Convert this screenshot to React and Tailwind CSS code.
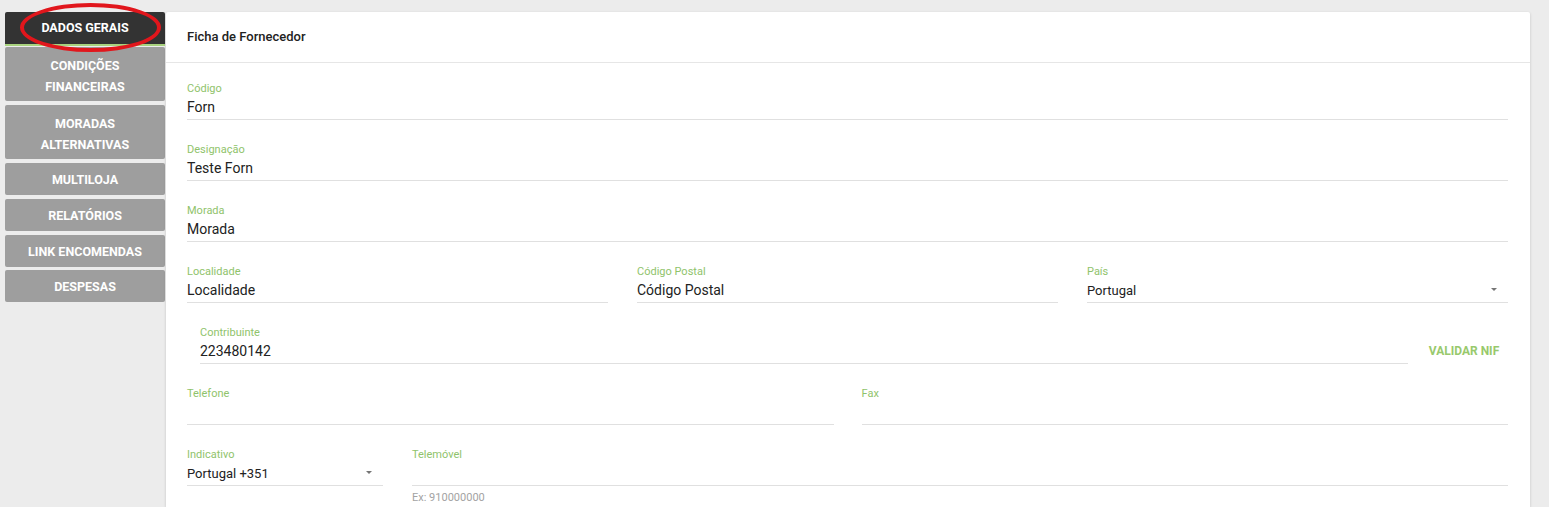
import React from "react";

const LABEL = "text-[11px] leading-[14px] text-[#8fc36b]";

function Field({ label, value, className = "", select = false, hint }) {
  return (
    <div className={"relative flex flex-col " + className}>
      <div className={LABEL}>{label}</div>
      <div className={(select ? "text-[13px]" : "text-[14px]") + " leading-[23px] h-[23px] text-[#222]"}>{value}</div>
      <div className="h-px bg-[#e0e0e0]" />
      {select && (
        <div className="absolute right-[11px] top-[23px] w-0 h-0 border-l-[3px] border-r-[3px] border-t-[3px] border-l-transparent border-r-transparent border-t-[#757575]" />
      )}
      {hint && (
        <div className="absolute left-0 top-[43px] text-[11px] leading-[14px] text-[#a3a3a3]">{hint}</div>
      )}
    </div>
  );
}

function Tab({ children, className = "" }) {
  return (
    <div
      className={
        "flex flex-col items-center justify-center rounded-[2px] bg-[#9e9e9e] text-white text-[12.5px] font-bold leading-[21px] text-center " +
        className
      }
    >
      {children}
    </div>
  );
}

export default function App() {
  return (
    <div
      className="relative min-h-[507px] bg-[#ececec] flex pt-[12px] pl-[5px] pr-[19px]"
      style={{ fontFamily: "Roboto, 'Liberation Sans', sans-serif" }}
    >
      <div className="w-[160px] shrink-0 flex flex-col">
        <div className="h-[34px] flex items-center justify-center pt-[1px] rounded-t-[2px] bg-[#333333] border-b-2 border-[#a8d27e] text-white text-[12.5px] font-bold">
          DADOS GERAIS
        </div>
        <Tab className="h-[54px] mt-[1px] pt-[3px]">
          <span>CONDIÇÕES</span>
          <span>FINANCEIRAS</span>
        </Tab>
        <Tab className="h-[54px] mt-[4px] pt-[3px]">
          <span>MORADAS</span>
          <span>ALTERNATIVAS</span>
        </Tab>
        <Tab className="h-[32px] mt-[4px] pt-[1px]">MULTILOJA</Tab>
        <Tab className="h-[32px] mt-[4px] pt-[1px]">RELATÓRIOS</Tab>
        <Tab className="h-[32px] mt-[4px] pt-[1px]">LINK ENCOMENDAS</Tab>
        <Tab className="h-[32px] mt-[3px] pt-[1px]">DESPESAS</Tab>
      </div>

      <div className="flex-1 ml-[1px] bg-white shadow-[0_1px_3px_rgba(0,0,0,0.18)] rounded-t-[2px]">
        <div className="h-[51px] flex items-center px-[21px] border-b border-[#e6e6e6] text-[13px] font-medium text-[#222]">
          Ficha de Fornecedor
        </div>
        <div className="pl-[21px] pr-[22px] pt-[19px] flex flex-col gap-[23px]">
          <Field label="Código" value="Forn" />
          <Field label="Designação" value="Teste Forn" />
          <Field label="Morada" value="Morada" />
          <div className="grid grid-cols-3 gap-[29px]">
            <Field label="Localidade" value="Localidade" />
            <Field label="Código Postal" value="Código Postal" />
            <Field label="País" value="Portugal" select />
          </div>
          <div className="flex items-end pl-[13px] gap-[12px]">
            <Field label="Contribuinte" value="223480142" className="flex-1" />
            <button className="w-[88px] h-[26px] text-[12px] font-bold text-[#98c96c] text-center">
              VALIDAR NIF
            </button>
          </div>
          <div className="grid grid-cols-2 gap-[28px]">
            <Field label="Telefone" value="" />
            <Field label="Fax" value="" />
          </div>
          <div className="flex gap-[29px]">
            <Field label="Indicativo" value="Portugal +351" select className="w-[196px]" />
            <Field label="Telemóvel" value="" hint="Ex: 910000000" className="flex-1" />
          </div>
        </div>
      </div>

      <div className="absolute left-[20px] top-[3px] w-[141px] h-[49px] rounded-[50%] border-4 border-[#e1161c] pointer-events-none" />
    </div>
  );
}
